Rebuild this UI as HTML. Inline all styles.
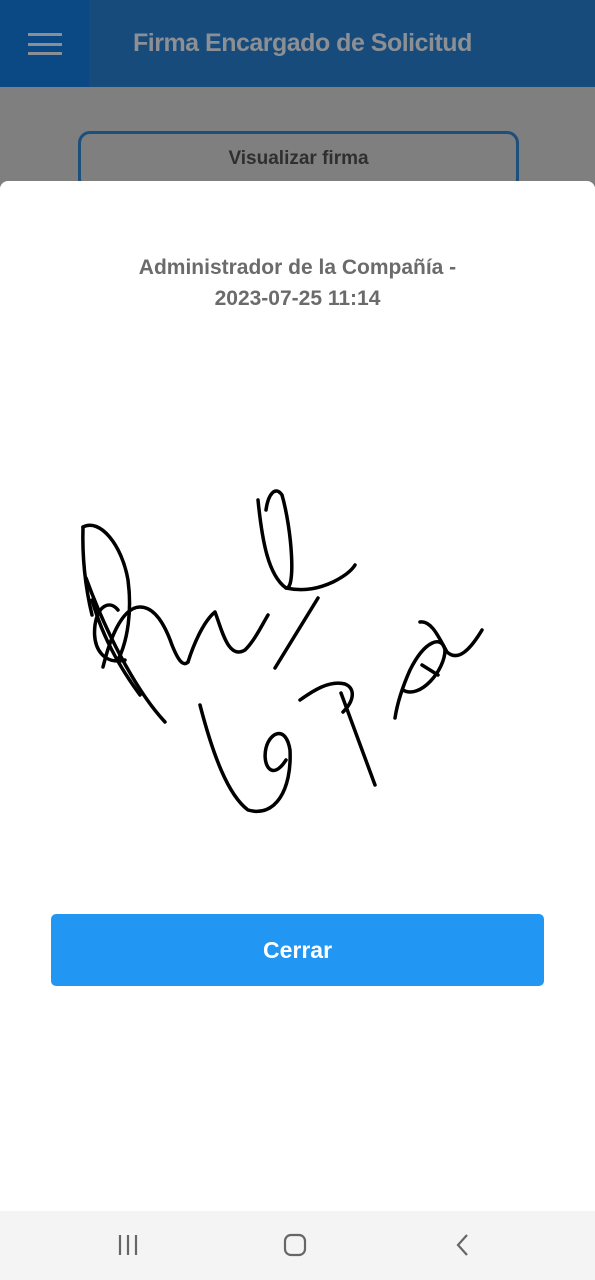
<!DOCTYPE html>
<html><head><meta charset="utf-8"><style>
html,body{margin:0;padding:0;width:595px;height:1280px;overflow:hidden;font-family:"Liberation Sans",sans-serif;background:#fff;position:relative}
.hdr{position:absolute;left:0;top:0;width:595px;height:87px;background:#174b7b}
.menu{position:absolute;left:0;top:0;width:89px;height:87px;background:#0b4985}
.menu i{position:absolute;left:28px;width:34px;height:3px;background:#8a8f96}
.title{position:absolute;left:133px;top:29px;font-size:25px;font-weight:bold;color:#8c8f93;letter-spacing:-0.5px}
.gray{position:absolute;left:0;top:87px;width:595px;height:100px;background:#7f7f7f}
.vbtn{position:absolute;left:78px;top:131px;width:441px;height:60px;border:3px solid #1c4f7c;border-radius:12px;box-sizing:border-box;text-align:center;font-size:19px;font-weight:bold;color:#2f2f2f;padding-top:14px}
.modal{position:absolute;left:0;top:181px;width:595px;height:1030px;background:#fff;border-radius:8px 8px 0 0}
.sub{position:absolute;left:0;top:252px;width:595px;text-align:center;font-size:21px;font-weight:bold;color:#6b6b6b;line-height:31px}
.btn{position:absolute;left:51px;top:914px;width:493px;height:72px;background:#2196f3;border-radius:5px;color:#fff;font-size:23px;font-weight:bold;text-align:center;line-height:72px}
.nav{position:absolute;left:0;top:1211px;width:595px;height:69px;background:#f4f4f4}
</style></head><body>
<div class="hdr"><div class="menu"><i style="top:33px"></i><i style="top:43px"></i><i style="top:52px"></i></div><div class="title">Firma Encargado de Solicitud</div></div>
<div class="gray"></div>
<div class="vbtn">Visualizar firma</div>
<div class="modal"></div>
<div class="sub">Administrador de la Compañía -<br>2023-07-25 11:14</div>
<svg style="position:absolute;left:0;top:0" width="595" height="1280" fill="none" stroke="#000" stroke-width="3.5" stroke-linecap="round" stroke-linejoin="round">
<path d="M83,527 C100,518 122,545 128,580 C132,610 128,640 118,660"/>
<path d="M83,527 C82,560 86,590 92,615"/>
<path d="M86,578 C105,630 135,690 165,722"/>
<path d="M92,600 C102,635 118,665 140,695"/>
<path d="M125,660 C105,665 92,650 95,625 C98,605 110,600 118,610"/>
<path d="M103,667 C112,630 125,607 140,607 C155,607 165,625 172,645 C178,660 183,667 188,662"/>
<path d="M188,662 C195,640 205,620 215,612 C222,630 228,660 245,650 C255,640 262,625 268,615"/>
<path d="M258,500 C262,540 268,575 286,588 C296,590 292,530 282,495 C275,485 268,495 266,510"/>
<path d="M286,588 C305,592 320,588 333,582 C345,576 352,570 355,565"/>
<path d="M318,598 L275,668"/>
<path d="M200,705 C213,755 228,795 248,810 C275,818 292,790 290,750 C286,725 270,732 266,748 C262,765 272,782 286,760"/>
<path d="M341,693 L375,785"/>
<path d="M343,712 C355,700 355,688 345,684 C330,680 314,690 300,700"/>
<path d="M403,690 C420,700 445,670 445,650 C442,635 425,640 410,670 C402,688 397,705 395,718"/>
<path d="M420,622 C432,620 440,640 447,652 C458,662 470,650 482,630"/>
<path d="M422,665 L438,675"/>
</svg>
<div class="btn">Cerrar</div>
<div class="nav">
<svg width="595" height="69" fill="none" stroke="#666" stroke-width="2.2">
<path d="M120,24v20M128,24v20M136,24v20"/>
<rect x="285" y="24" width="20" height="20" rx="6"/>
<path d="M467,24l-9,10l9,10"/>
</svg></div>
</body></html>
